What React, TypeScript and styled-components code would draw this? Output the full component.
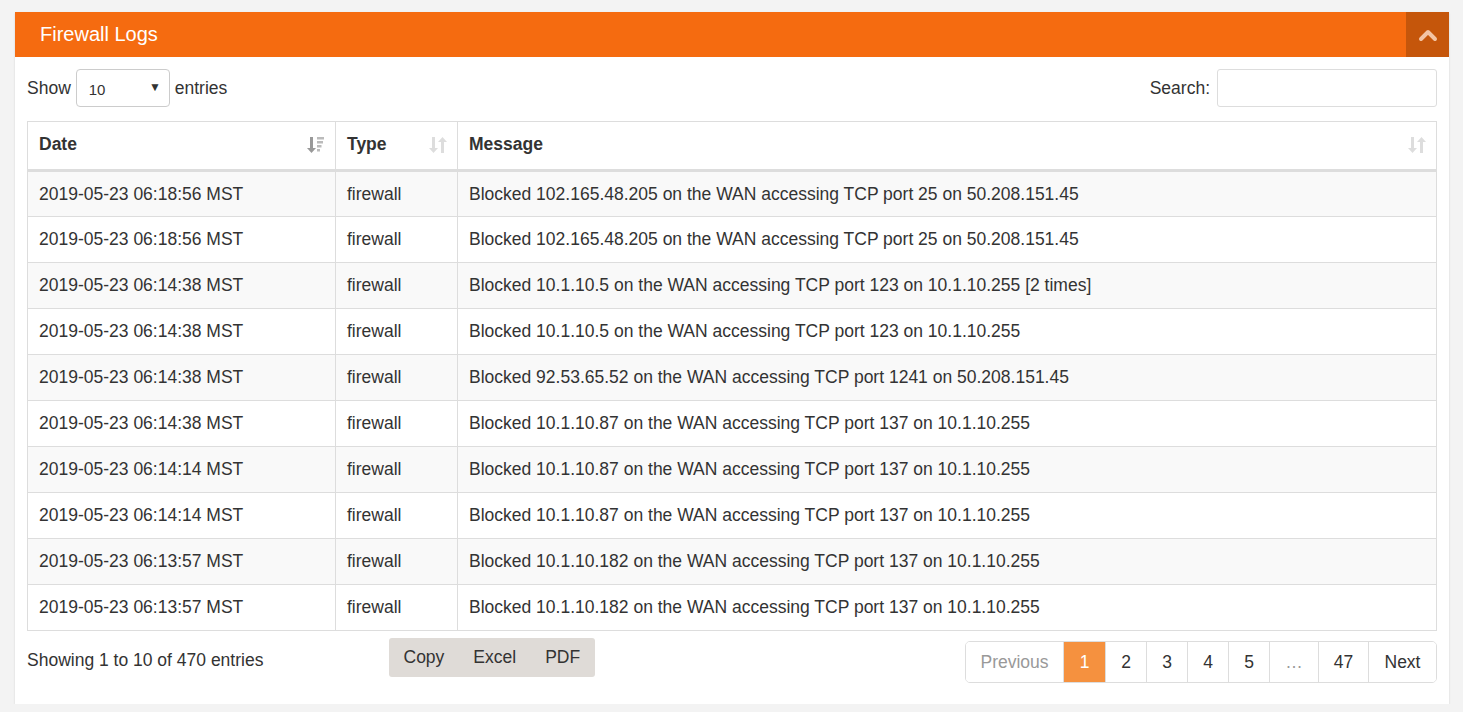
import * as React from 'react';
import styled, { createGlobalStyle } from 'styled-components';

const GlobalStyle = createGlobalStyle`
  html, body {
    margin: 0;
    padding: 0;
    background: #f3f3f3;
    font-family: "Liberation Sans", Arial, sans-serif;
    color: #333;
  }
  * { box-sizing: border-box; }
`;

interface LogRow {
  date: string;
  type: string;
  message: string;
}

const rows: LogRow[] = [
  { date: '2019-05-23 06:18:56 MST', type: 'firewall', message: 'Blocked 102.165.48.205 on the WAN accessing TCP port 25 on 50.208.151.45' },
  { date: '2019-05-23 06:18:56 MST', type: 'firewall', message: 'Blocked 102.165.48.205 on the WAN accessing TCP port 25 on 50.208.151.45' },
  { date: '2019-05-23 06:14:38 MST', type: 'firewall', message: 'Blocked 10.1.10.5 on the WAN accessing TCP port 123 on 10.1.10.255 [2 times]' },
  { date: '2019-05-23 06:14:38 MST', type: 'firewall', message: 'Blocked 10.1.10.5 on the WAN accessing TCP port 123 on 10.1.10.255' },
  { date: '2019-05-23 06:14:38 MST', type: 'firewall', message: 'Blocked 92.53.65.52 on the WAN accessing TCP port 1241 on 50.208.151.45' },
  { date: '2019-05-23 06:14:38 MST', type: 'firewall', message: 'Blocked 10.1.10.87 on the WAN accessing TCP port 137 on 10.1.10.255' },
  { date: '2019-05-23 06:14:14 MST', type: 'firewall', message: 'Blocked 10.1.10.87 on the WAN accessing TCP port 137 on 10.1.10.255' },
  { date: '2019-05-23 06:14:14 MST', type: 'firewall', message: 'Blocked 10.1.10.87 on the WAN accessing TCP port 137 on 10.1.10.255' },
  { date: '2019-05-23 06:13:57 MST', type: 'firewall', message: 'Blocked 10.1.10.182 on the WAN accessing TCP port 137 on 10.1.10.255' },
  { date: '2019-05-23 06:13:57 MST', type: 'firewall', message: 'Blocked 10.1.10.182 on the WAN accessing TCP port 137 on 10.1.10.255' },
];

const Page = styled.div`
  padding: 12px 14px 0 15px;
`;

const Panel = styled.section`
  background: #fff;
  box-shadow: 0 1px 2px rgba(0, 0, 0, 0.12);
`;

const PanelHeader = styled.header`
  display: flex;
  align-items: center;
  justify-content: space-between;
  height: 45px;
  background: #f56b10;
  color: #fff;
`;

const PanelTitle = styled.h3`
  margin: 0 0 0 25px;
  font-size: 20px;
  font-weight: normal;
`;

const CollapseButton = styled.button`
  width: 43px;
  height: 45px;
  border: none;
  background: #c5560b;
  display: flex;
  align-items: center;
  justify-content: center;
  padding: 0;
  cursor: pointer;
`;

const PanelBody = styled.div`
  padding: 12px 12px 21px 12px;
`;

const Controls = styled.div`
  display: flex;
  align-items: center;
  justify-content: space-between;
  height: 38px;
  margin-bottom: 14px;
  font-size: 17.5px;
`;

const Label = styled.label`
  display: flex;
  align-items: center;
  gap: 5px;
`;

const SelectBox = styled.div`
  position: relative;
  width: 94px;
  height: 38px;
  border: 1px solid #ccc;
  border-radius: 4px;
  font-size: 15px;
  display: flex;
  align-items: center;
  padding-left: 12px;
  padding-top: 2px;
`;

const Caret = styled.span`
  position: absolute;
  right: 8px;
  top: 10px;
  font-size: 12px;
  color: #333;
`;

const SearchInput = styled.input`
  width: 220px;
  height: 38px;
  border: 1px solid #ddd;
  border-radius: 3px;
  margin-left: 2px;
  font: inherit;
`;

const Table = styled.table`
  width: 100%;
  border-collapse: collapse;
  font-size: 17.5px;
  border: 1px solid #ddd;
`;

const Th = styled.th<{ $width?: number }>`
  position: relative;
  text-align: left;
  font-weight: bold;
  height: 49px;
  padding: 0 30px 3px 11px;
  border: 1px solid #ddd;
  border-bottom: 3px solid #ddd;
  width: ${(p) => (p.$width ? `${p.$width}px` : 'auto')};
`;

const SortIcon = styled.span`
  position: absolute;
  right: 10px;
  top: 14px;
  display: flex;
`;

const Tr = styled.tr<{ $odd: boolean }>`
  background: ${(p) => (p.$odd ? '#f9f9f9' : '#fff')};
`;

const Td = styled.td`
  height: 46px;
  padding: 0 11px;
  border: 1px solid #ddd;
  white-space: nowrap;
`;

const Footer = styled.div`
  display: flex;
  align-items: flex-start;
  font-size: 17.5px;
`;

const Info = styled.div`
  width: 362px;
  padding-top: 19px;
`;

const ButtonGroup = styled.div`
  display: flex;
  margin-top: 7px;
  background: #dfdbd7;
  border-radius: 3px;
  height: 39px;
`;

const ExportButton = styled.button`
  border: none;
  background: transparent;
  font: inherit;
  color: #333;
  padding: 0 14.5px;
  cursor: pointer;
`;

const Pagination = styled.ul`
  display: flex;
  list-style: none;
  margin: 10px 0 0 auto;
  padding: 0;
  border: 1px solid #ddd;
  border-radius: 5px;
  height: 42px;
  overflow: hidden;
`;

const PageItem = styled.li<{ $active?: boolean; $muted?: boolean; $w: number }>`
  display: flex;
  align-items: center;
  justify-content: center;
  width: ${(p) => p.$w}px;
  border-left: 1px solid #ddd;
  background: ${(p) => (p.$active ? '#f5913f' : '#fff')};
  color: ${(p) => (p.$active ? '#fff' : p.$muted ? '#999' : '#333')};
  &:first-child {
    border-left: none;
  }
`;

function ChevronUp() {
  return (
    <svg width="20" height="14" viewBox="0 0 20 14">
      <path d="M3 11 L10 4 L17 11" fill="none" stroke="#f3c4a4" strokeWidth="4" strokeLinecap="round" strokeLinejoin="round" />
    </svg>
  );
}

function SortDescIcon() {
  return (
    <svg width="18" height="18" viewBox="0 0 18 18">
      <rect x="3" y="1" width="3" height="12" fill="#999" />
      <path d="M0 12 L9 12 L4.5 17 Z" fill="#999" />
      <rect x="10" y="1" width="7" height="2.5" fill="#bbb" />
      <rect x="10" y="5" width="6" height="2.5" fill="#bbb" />
      <rect x="10" y="9" width="4.5" height="2.5" fill="#bbb" />
      <rect x="10" y="13" width="3" height="2.5" fill="#bbb" />
    </svg>
  );
}

function SortBothIcon() {
  return (
    <svg width="18" height="18" viewBox="0 0 18 18">
      <rect x="3" y="1" width="3" height="12" fill="#ddd" />
      <path d="M0 12 L9 12 L4.5 17 Z" fill="#ddd" />
      <rect x="12" y="5" width="3" height="12" fill="#ddd" />
      <path d="M9 6 L18 6 L13.5 1 Z" fill="#ddd" />
    </svg>
  );
}

const pages: { label: string; w: number; active?: boolean; muted?: boolean }[] = [
  { label: 'Previous', w: 97, muted: true },
  { label: '1', w: 42, active: true },
  { label: '2', w: 41 },
  { label: '3', w: 41 },
  { label: '4', w: 41 },
  { label: '5', w: 41 },
  { label: '…', w: 49, muted: true },
  { label: '47', w: 50 },
  { label: 'Next', w: 68 },
];

export default function App(): JSX.Element {
  return (
    <Page>
      <GlobalStyle />
      <Panel>
        <PanelHeader>
          <PanelTitle>Firewall Logs</PanelTitle>
          <CollapseButton aria-label="Collapse">
            <ChevronUp />
          </CollapseButton>
        </PanelHeader>
        <PanelBody>
          <Controls>
            <Label>
              Show
              <SelectBox>
                10
                <Caret>▼</Caret>
              </SelectBox>
              entries
            </Label>
            <Label>
              Search:
              <SearchInput type="search" />
            </Label>
          </Controls>
          <Table>
            <thead>
              <tr>
                <Th $width={308}>
                  Date
                  <SortIcon>
                    <SortDescIcon />
                  </SortIcon>
                </Th>
                <Th $width={122}>
                  Type
                  <SortIcon>
                    <SortBothIcon />
                  </SortIcon>
                </Th>
                <Th>
                  Message
                  <SortIcon>
                    <SortBothIcon />
                  </SortIcon>
                </Th>
              </tr>
            </thead>
            <tbody>
              {rows.map((r, i) => (
                <Tr key={i} $odd={i % 2 === 0}>
                  <Td>{r.date}</Td>
                  <Td>{r.type}</Td>
                  <Td>{r.message}</Td>
                </Tr>
              ))}
            </tbody>
          </Table>
          <Footer>
            <Info>Showing 1 to 10 of 470 entries</Info>
            <ButtonGroup>
              <ExportButton>Copy</ExportButton>
              <ExportButton>Excel</ExportButton>
              <ExportButton>PDF</ExportButton>
            </ButtonGroup>
            <Pagination>
              {pages.map((p) => (
                <PageItem key={p.label} $w={p.w} $active={p.active} $muted={p.muted}>
                  {p.label}
                </PageItem>
              ))}
            </Pagination>
          </Footer>
        </PanelBody>
      </Panel>
    </Page>
  );
}
